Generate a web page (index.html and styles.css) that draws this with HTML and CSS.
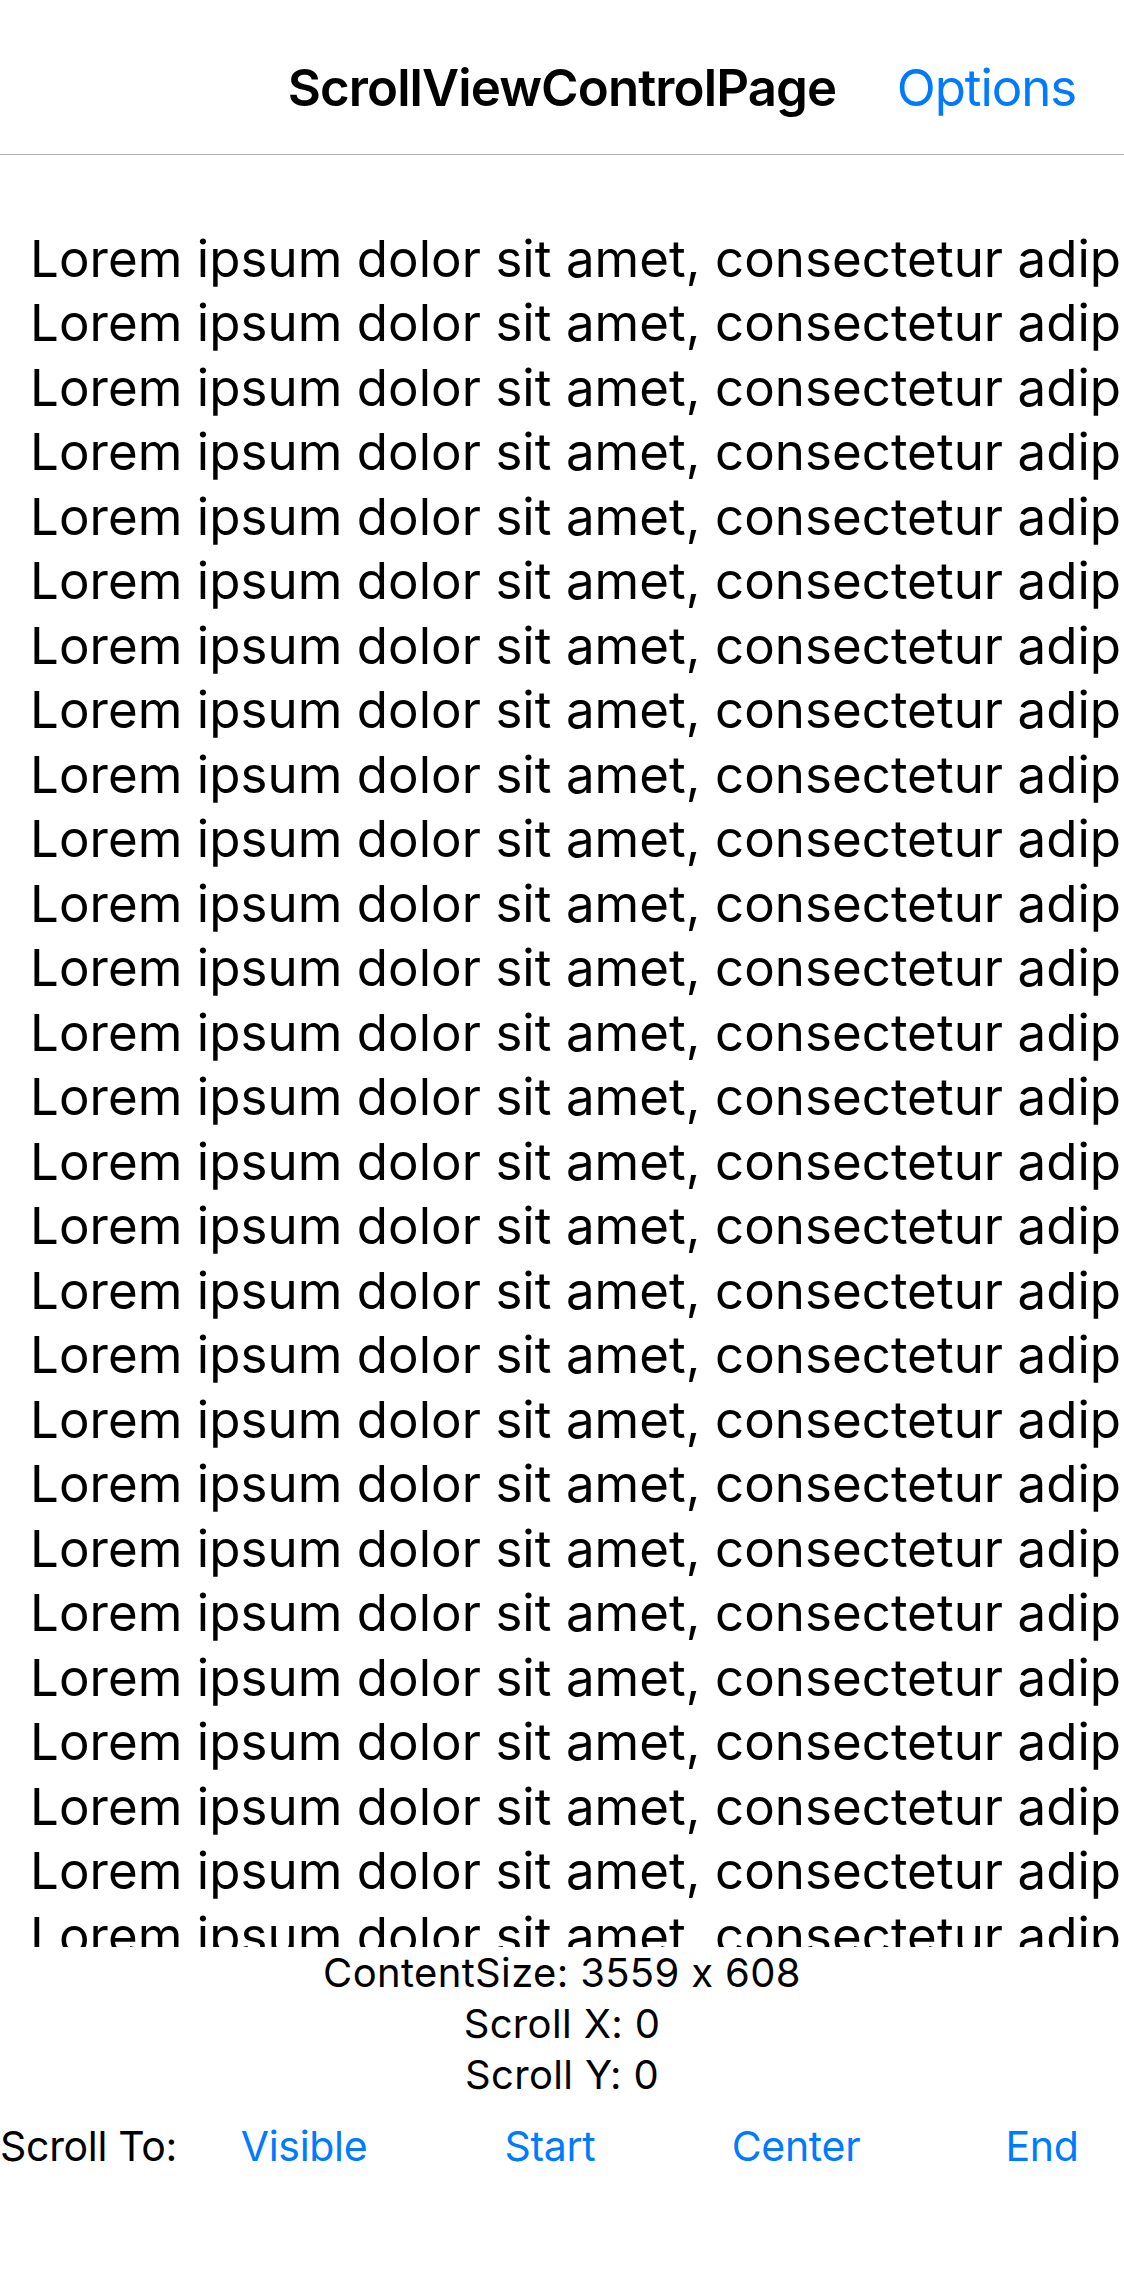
FILE: index.html
```html
<!DOCTYPE html>
<html lang="en">
<head>
<meta charset="utf-8">
<title>ScrollViewControlPage</title>
<link rel="stylesheet" href="styles.css">
</head>
<body>
<div class="page">
  <header class="navbar">
    <div class="nav-side"></div>
    <div class="nav-title">ScrollViewControlPage</div>
    <div class="nav-side nav-right"><span class="nav-action">Options</span></div>
  </header>
  <main class="scroller">
    <div class="scroll-content">
      <div class="line">Lorem ipsum dolor sit amet, consectetur adipiscing elit, sed do eiusmod tempor incididunt ut labore et dolore magna aliqua.</div>
      <div class="line">Lorem ipsum dolor sit amet, consectetur adipiscing elit, sed do eiusmod tempor incididunt ut labore et dolore magna aliqua.</div>
      <div class="line">Lorem ipsum dolor sit amet, consectetur adipiscing elit, sed do eiusmod tempor incididunt ut labore et dolore magna aliqua.</div>
      <div class="line">Lorem ipsum dolor sit amet, consectetur adipiscing elit, sed do eiusmod tempor incididunt ut labore et dolore magna aliqua.</div>
      <div class="line">Lorem ipsum dolor sit amet, consectetur adipiscing elit, sed do eiusmod tempor incididunt ut labore et dolore magna aliqua.</div>
      <div class="line">Lorem ipsum dolor sit amet, consectetur adipiscing elit, sed do eiusmod tempor incididunt ut labore et dolore magna aliqua.</div>
      <div class="line">Lorem ipsum dolor sit amet, consectetur adipiscing elit, sed do eiusmod tempor incididunt ut labore et dolore magna aliqua.</div>
      <div class="line">Lorem ipsum dolor sit amet, consectetur adipiscing elit, sed do eiusmod tempor incididunt ut labore et dolore magna aliqua.</div>
      <div class="line">Lorem ipsum dolor sit amet, consectetur adipiscing elit, sed do eiusmod tempor incididunt ut labore et dolore magna aliqua.</div>
      <div class="line">Lorem ipsum dolor sit amet, consectetur adipiscing elit, sed do eiusmod tempor incididunt ut labore et dolore magna aliqua.</div>
      <div class="line">Lorem ipsum dolor sit amet, consectetur adipiscing elit, sed do eiusmod tempor incididunt ut labore et dolore magna aliqua.</div>
      <div class="line">Lorem ipsum dolor sit amet, consectetur adipiscing elit, sed do eiusmod tempor incididunt ut labore et dolore magna aliqua.</div>
      <div class="line">Lorem ipsum dolor sit amet, consectetur adipiscing elit, sed do eiusmod tempor incididunt ut labore et dolore magna aliqua.</div>
      <div class="line">Lorem ipsum dolor sit amet, consectetur adipiscing elit, sed do eiusmod tempor incididunt ut labore et dolore magna aliqua.</div>
      <div class="line">Lorem ipsum dolor sit amet, consectetur adipiscing elit, sed do eiusmod tempor incididunt ut labore et dolore magna aliqua.</div>
      <div class="line">Lorem ipsum dolor sit amet, consectetur adipiscing elit, sed do eiusmod tempor incididunt ut labore et dolore magna aliqua.</div>
      <div class="line">Lorem ipsum dolor sit amet, consectetur adipiscing elit, sed do eiusmod tempor incididunt ut labore et dolore magna aliqua.</div>
      <div class="line">Lorem ipsum dolor sit amet, consectetur adipiscing elit, sed do eiusmod tempor incididunt ut labore et dolore magna aliqua.</div>
      <div class="line">Lorem ipsum dolor sit amet, consectetur adipiscing elit, sed do eiusmod tempor incididunt ut labore et dolore magna aliqua.</div>
      <div class="line">Lorem ipsum dolor sit amet, consectetur adipiscing elit, sed do eiusmod tempor incididunt ut labore et dolore magna aliqua.</div>
      <div class="line">Lorem ipsum dolor sit amet, consectetur adipiscing elit, sed do eiusmod tempor incididunt ut labore et dolore magna aliqua.</div>
      <div class="line">Lorem ipsum dolor sit amet, consectetur adipiscing elit, sed do eiusmod tempor incididunt ut labore et dolore magna aliqua.</div>
      <div class="line">Lorem ipsum dolor sit amet, consectetur adipiscing elit, sed do eiusmod tempor incididunt ut labore et dolore magna aliqua.</div>
      <div class="line">Lorem ipsum dolor sit amet, consectetur adipiscing elit, sed do eiusmod tempor incididunt ut labore et dolore magna aliqua.</div>
      <div class="line">Lorem ipsum dolor sit amet, consectetur adipiscing elit, sed do eiusmod tempor incididunt ut labore et dolore magna aliqua.</div>
      <div class="line">Lorem ipsum dolor sit amet, consectetur adipiscing elit, sed do eiusmod tempor incididunt ut labore et dolore magna aliqua.</div>
      <div class="line">Lorem ipsum dolor sit amet, consectetur adipiscing elit, sed do eiusmod tempor incididunt ut labore et dolore magna aliqua.</div>
      <div class="line">Lorem ipsum dolor sit amet, consectetur adipiscing elit, sed do eiusmod tempor incididunt ut labore et dolore magna aliqua.</div>
    </div>
  </main>
  <section class="info">
    <div class="info-line">ContentSize: 3559 x 608</div>
    <div class="info-line">Scroll X: 0</div>
    <div class="info-line">Scroll Y: 0</div>
  </section>
  <nav class="scroll-to">
    <span class="scroll-label">Scroll To:</span>
    <span class="scroll-btn">Visible</span>
    <span class="scroll-btn">Start</span>
    <span class="scroll-btn">Center</span>
    <span class="scroll-btn">End</span>
  </nav>
</div>
</body>
</html>
```

FILE: styles.css
```css
* {
  box-sizing: border-box;
}

html, body {
  margin: 0;
  padding: 0;
  background: #ffffff;
}

body {
  font-family: "Inter", "Roboto", "Liberation Sans", sans-serif;
  font-feature-settings: "calt" 0;
  color: #000000;
}

.page {
  width: 1124px;
  height: 2286px;
  overflow: hidden;
  display: flex;
  flex-direction: column;
}

.navbar {
  height: 155px;
  padding-top: 56px;
  border-bottom: 1px solid #b2b2b2;
  display: grid;
  grid-template-columns: 1fr auto 1fr;
  align-items: start;
  flex: none;
}

.nav-title {
  font-size: 51px;
  font-weight: 600;
  line-height: 64px;
  letter-spacing: -0.9px;
  white-space: nowrap;
}

.nav-right {
  display: flex;
  justify-content: flex-end;
  padding-right: 48px;
}

.nav-action {
  font-size: 51px;
  line-height: 64px;
  letter-spacing: -1.1px;
  color: #007aff;
}

.scroller {
  height: 1792px;
  flex: none;
  overflow: hidden;
}

.scroll-content {
  padding-top: 72px;
  padding-left: 30px;
}

.line {
  font-size: 51px;
  line-height: 64.48px;
  letter-spacing: 0.05px;
  white-space: nowrap;
}

.info {
  flex: none;
  display: flex;
  flex-direction: column;
  align-items: center;
}

.info-line {
  font-size: 40px;
  line-height: 51px;
  letter-spacing: 0.35px;
  white-space: nowrap;
}

.scroll-to {
  flex: none;
  display: grid;
  grid-template-columns: 181px repeat(4, 246px);
  align-items: center;
  padding-top: 16px;
  white-space: nowrap;
}

.scroll-label {
  font-size: 41px;
  line-height: 60px;
  letter-spacing: -0.3px;
}

.scroll-btn {
  font-size: 41px;
  line-height: 60px;
  letter-spacing: -0.3px;
  color: #007aff;
  text-align: center;
}
```
